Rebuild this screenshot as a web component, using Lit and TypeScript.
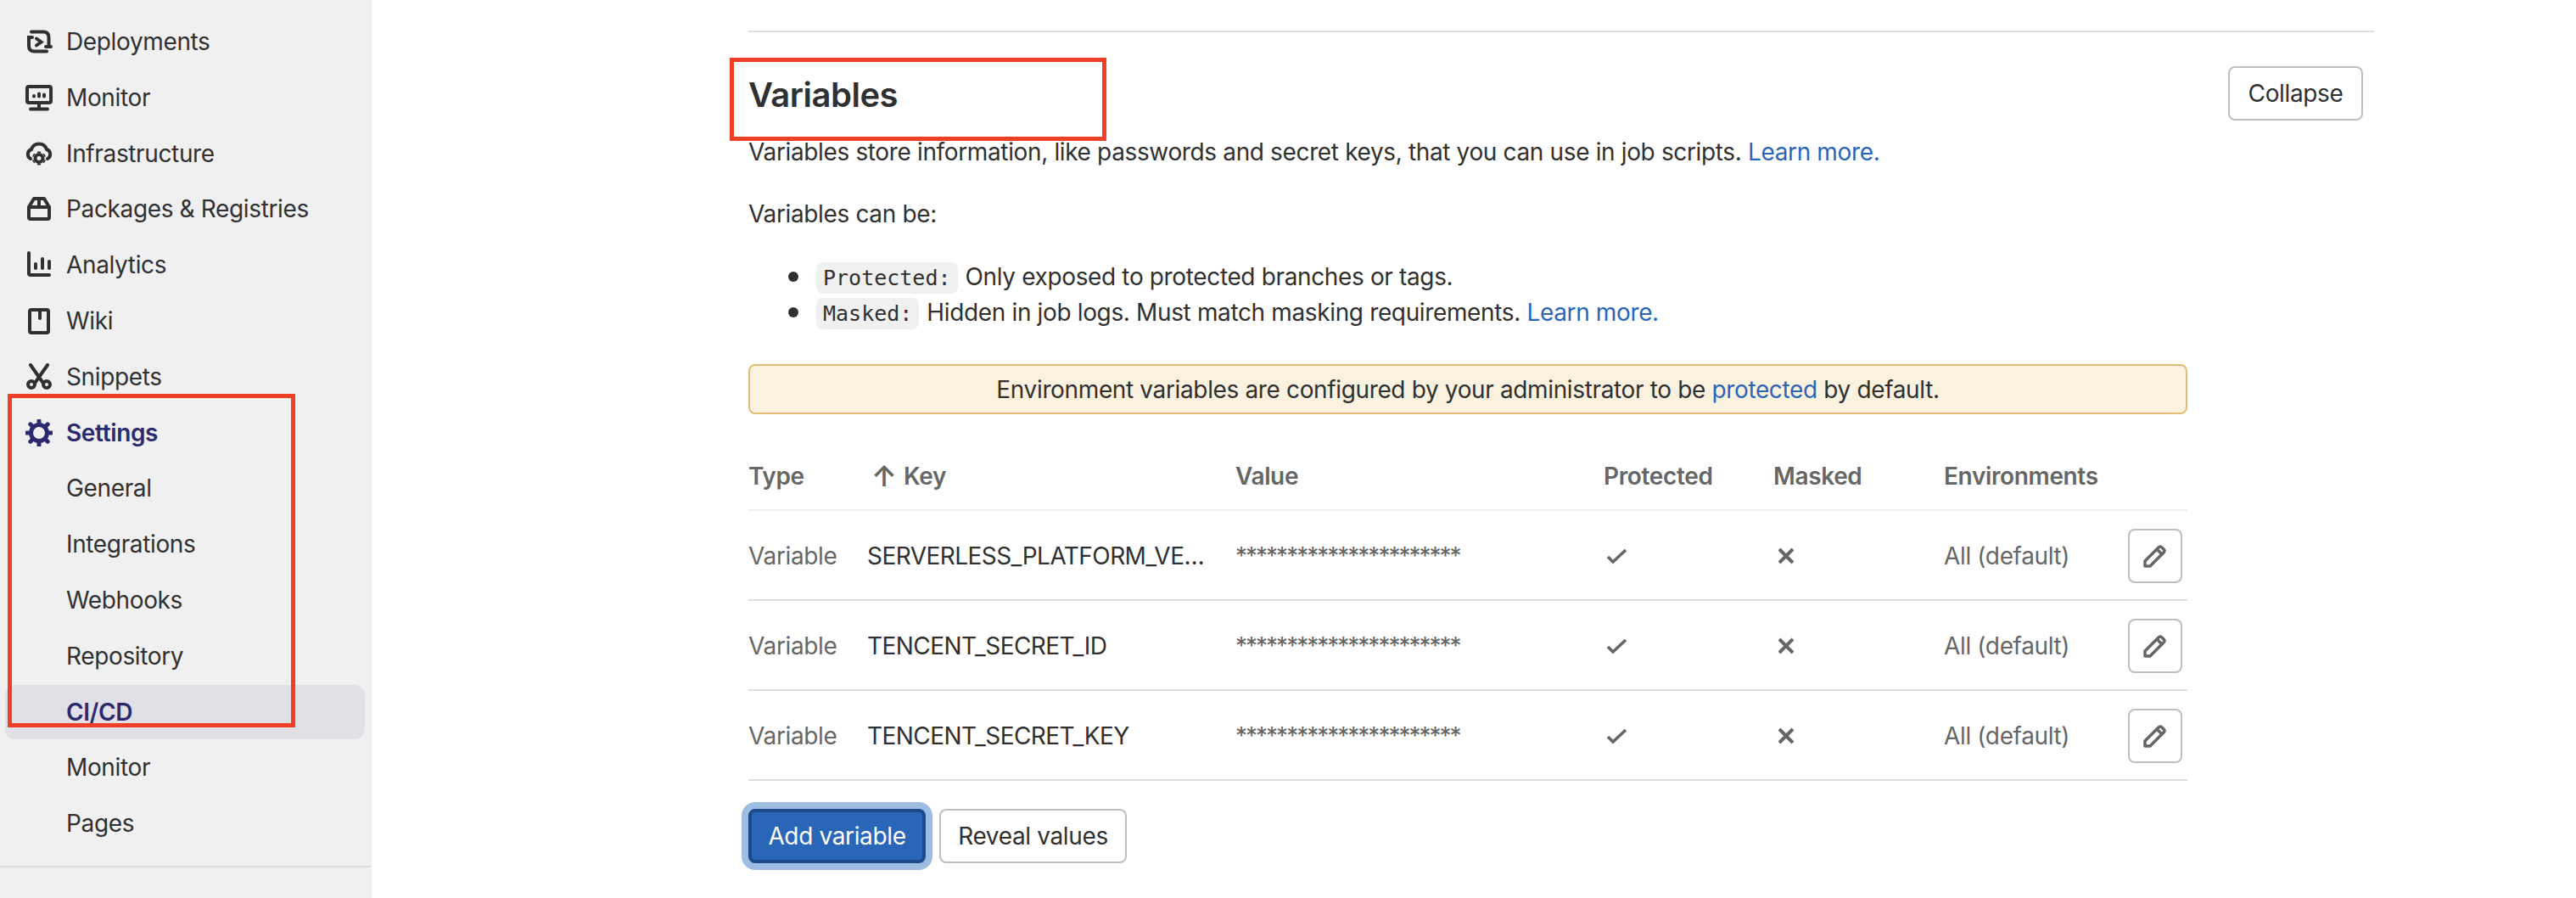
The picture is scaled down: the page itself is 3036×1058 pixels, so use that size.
import { LitElement, html, css, svg } from "lit";
import { customElement } from "lit/decorators.js";

const icons: Record<string, any> = {
  deploy: svg`<path d="M7 4.500H21Q27.500 4.500 27.500 11V22M24 22H30" fill="none"/><path d="M8 11H4V21Q4 27.500 10.500 27.500H25" fill="none"/><path d="M13 12.500L18.500 16.500L13 20.500" fill="none"/>`,
  monitor: svg`<rect x="2" y="3" width="28" height="19" rx="2" fill="none"/><path d="M16 22V28M6 29.500H26" fill="none"/><path d="M10 14V14.500M16 11.500V14.500M22 12.500V14.500" fill="none"/>`,
  infra: svg`<path d="M6 22A6 6 0 0 1 7 11A9.500 9.500 0 0 1 25 11A6 6 0 0 1 26 22" fill="none"/><circle cx="16" cy="21.500" r="4.500" fill="none"/><path d="M16 13.500V15M16 28V29.500M9 17.500L10.300 18.300M21.700 24.700L23 25.500M9 25.500L10.300 24.700M21.700 18.300L23 17.500" fill="none" stroke-linecap="butt"/>`,
  pkg: svg`<path d="M4 14L10 4H22L28 14V26Q28 28 26 28H6Q4 28 4 26Z" fill="none" stroke-linejoin="round"/><path d="M4 14H28M16 4V14" fill="none"/>`,
  chart: svg`<path d="M4 2V26Q4 28 6 28H28" fill="none"/><path d="M12 15V20M20 9V20M28 12V20" fill="none"/>`,
  book: svg`<rect x="5" y="3" width="22" height="27" rx="2" fill="none"/><path d="M17 3V13" fill="none"/>`,
  snip: svg`<path d="M6 2L20 22M26 2L12 22" fill="none"/><circle cx="7" cy="25" r="4" fill="none"/><circle cx="25" cy="25" r="4" fill="none"/>`,
  gear: svg`<circle cx="16" cy="16" r="9.500" fill="none" stroke-width="5"/><path d="M16 1.500V6M16 26V30.500M1.500 16H6M26 16H30.500M5.800 5.800L9 9M23 23L26.200 26.200M5.800 26.200L9 23M23 9L26.200 5.800" fill="none" stroke-width="5"/>`,
};

const nav = [
  { t: "Deployments", i: "deploy" },
  { t: "Monitor", i: "monitor" },
  { t: "Infrastructure", i: "infra" },
  { t: "Packages & Registries", i: "pkg" },
  { t: "Analytics", i: "chart" },
  { t: "Wiki", i: "book" },
  { t: "Snippets", i: "snip" },
  { t: "Settings", i: "gear", on: true },
  { t: "General" },
  { t: "Integrations" },
  { t: "Webhooks" },
  { t: "Repository" },
  { t: "CI/CD", on: true, active: true },
  { t: "Monitor" },
  { t: "Pages" },
];

const rows = ["SERVERLESS_PLATFORM_VE…", "TENCENT_SECRET_ID", "TENCENT_SECRET_KEY"];

@customElement("app-root")
export class AppRoot extends LitElement {
  static styles = css`
    :host { display: block; width: 3036px; height: 1058px; overflow: hidden; position: relative; background: #fff; color: #303030; font-family: Inter, "Liberation Sans", sans-serif; font-size: 28px; letter-spacing: -0.36px; }
    * { box-sizing: border-box; }
    .page { display: flex; height: 1058px; }
    .side { width: 438px; flex: none; background: #f0f0f0; display: flex; flex-direction: column; gap: 1.800px; padding: 17px 8px 0 6px; height: 1058px; position: relative; }
    .item { height: 64px; display: flex; align-items: center; padding-left: 72px; border-radius: 12px; flex: none; position: relative; }
    .item.on { color: #2c2a6e; font-weight: 600; }
    .item.active { background: #e1e0e6; }
    .item svg { position: absolute; left: 24px; top: 16px; width: 32px; height: 32px; stroke: currentColor; stroke-width: 4; stroke-linecap: round; }
    .sidefoot { height: 2px; background: #dcdcde; margin: 16px -8px 0 -6px; flex: none; }
    .main { flex: 1; padding: 36px 238px 0 444px; }
    .rule { height: 2px; background: #dcdcde; }
    .head { display: flex; justify-content: space-between; margin-top: 40px; padding-right: 13px; height: 81px; }
    h2 { margin: 6px 0 0; font-size: 40px; line-height: 56px; font-weight: 600; letter-spacing: -0.5px; }
    .btn { height: 64px; border: 2px solid #bfbfbf; border-radius: 8px; background: #fff; color: #303030; font: inherit; letter-spacing: inherit; display: inline-flex; align-items: center; justify-content: center; }
    .collapse { width: 159px; }
    p { margin: 0; line-height: 40px; }
    p + p { margin-top: 33px; }
    a { color: #2a65b8; text-decoration: none; }
    ul { margin: 34px 0 0; padding: 0 0 0 80px; list-style: none; }
    li { height: 42px; line-height: 40px; position: relative; white-space: nowrap; }
    li::before { content: ""; position: absolute; left: -33px; top: 14px; width: 12px; height: 12px; border-radius: 50%; background: #303030; }
    code { font-family: "DejaVu Sans Mono", monospace; font-size: 25px; letter-spacing: 0; background: #f0f0f0; border-radius: 8px; padding: 4px 8px; margin-right: 9px; }
    .alert { margin-top: 39px; height: 59px; width: 1696px; background: #faf2df; border: 2px solid #e2bc72; border-radius: 8px; display: flex; align-items: center; justify-content: center; white-space: pre; }
    .table { margin-top: 32px; width: 1696px; }
    .row { display: grid; grid-template-columns: 140px 434px 434px 200px 201px 217px 70px; align-items: center; height: 106px; border-bottom: 2px solid #dcdcde; color: #666; padding-top: 1px; }
    .row.hd { height: 82px; border-bottom-color: #f0f0f0; font-weight: 600; padding-top: 2px; }
    .sort { padding-left: 5px; display: flex; align-items: center; gap: 8px; }
    .arrow { width: 30px; font-size: 34px; line-height: 34px; text-align: center; letter-spacing: 0; }
    .key { color: #303030; white-space: nowrap; letter-spacing: -0.55px; }
    .mask { letter-spacing: -2px; white-space: nowrap; }
    .ic { width: 32px; height: 32px; display: block; fill: none; stroke: #666; stroke-width: 3.500; }
    .edit { width: 64px; padding: 0; }
    .actions { display: flex; align-items: center; gap: 16px; margin-top: 33px; }
    .primary { width: 209px; background: #2a66b8; border: 4px solid #1f4a8a; color: #fff; box-shadow: 0 0 0 8px #9dbde3; }
    .reveal { width: 221px; }
    .mark { position: absolute; border: 5px solid #ee4027; pointer-events: none; }
    .m1 { left: 9px; top: 464px; width: 339px; height: 393px; }
    .m2 { left: 860px; top: 68px; width: 444px; height: 98px; }
  `;

  render() {
    return html`
      <div class="page">
        <nav class="side">
          ${nav.map((n) => html`<div class="item ${n.on ? "on" : ""} ${n.active ? "active" : ""}">
            ${n.i ? html`<svg viewBox="0 0 32 32">${icons[n.i]}</svg>` : ""}${n.t}</div>`)}
          <div class="sidefoot"></div>
        </nav>
        <main class="main">
          <div class="rule"></div>
          <div class="head"><h2>Variables</h2><button class="btn collapse">Collapse</button></div>
          <p>Variables store information, like passwords and secret keys, that you can use in job scripts. <a>Learn more.</a></p>
          <p>Variables can be:</p>
          <ul>
            <li><code>Protected:</code>Only exposed to protected branches or tags.</li>
            <li><code>Masked:</code>Hidden in job logs. Must match masking requirements. <a>Learn more.</a></li>
          </ul>
          <div class="alert">Environment variables are configured by your administrator to be <a>protected</a> by default.</div>
          <div class="table">
            <div class="row hd">
              <div>Type</div><div class="sort"><span class="arrow">↑</span><span>Key</span></div><div>Value</div><div>Protected</div><div>Masked</div><div>Environments</div><div></div>
            </div>
            ${rows.map((k) => html`<div class="row">
              <div>Variable</div>
              <div class="key">${k}</div>
              <div class="mask">**********************</div>
              <div><svg class="ic" viewBox="0 0 32 32"><path d="M5 17L11 23L26 9"/></svg></div>
              <div><svg class="ic" viewBox="0 0 32 32"><path d="M7 8L23 24M23 8L7 24" stroke-width="4"/></svg></div>
              <div>All (default)</div>
              <div><button class="btn edit"><svg class="ic" viewBox="0 0 32 32"><path d="M4 28V22L20 6Q22 4 24 6L26 8Q28 10 26 12L10 28Z" stroke-linejoin="round"/><path d="M18 8L24 14"/></svg></button></div>
            </div>`)}
          </div>
          <div class="actions"><button class="btn primary">Add variable</button><button class="btn reveal">Reveal values</button></div>
        </main>
      </div>
      <div class="mark m1"></div>
      <div class="mark m2"></div>
    `;
  }
}
